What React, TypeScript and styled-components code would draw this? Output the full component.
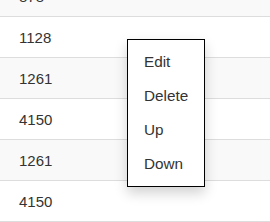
import styled, { createGlobalStyle } from "styled-components";

const GlobalStyle = createGlobalStyle`
  html, body {
    margin: 0;
    padding: 0;
    background: #fff;
    overflow: hidden;
  }
  body {
    font-family: "Liberation Sans", Arial, sans-serif;
    font-size: 15px;
    color: #333;
  }
`;

const Page = styled.div`
  position: relative;
  width: 270px;
  height: 222px;
  overflow: hidden;
`;

const Table = styled.div`
  display: flex;
  flex-direction: column;
  margin-top: -24px;
`;

const Row = styled.div<{ $striped: boolean }>`
  display: flex;
  align-items: center;
  height: 40px;
  padding-left: 19px;
  border-bottom: 1px solid #dddddd;
  background: ${(p) => (p.$striped ? "#f9f9f9" : "#ffffff")};
`;

const Menu = styled.ul`
  position: absolute;
  left: 127px;
  top: 39px;
  width: 76px;
  margin: 0;
  padding: 5px 0;
  list-style: none;
  background: #fff;
  border: 1px solid #000;
  box-shadow: 0 6px 12px rgba(0, 0, 0, 0.18);
`;

const MenuItem = styled.li`
  display: flex;
  align-items: center;
  height: 34px;
  padding-left: 16px;
  font-size: 15.3px;
  color: #333;
  cursor: pointer;
`;

const values = ["878", "1128", "1261", "4150", "1261", "4150"];
const actions = ["Edit", "Delete", "Up", "Down"];

export default function App() {
  return (
    <Page>
      <GlobalStyle />
      <Table>
        {values.map((v, i) => (
          <Row key={i} $striped={i % 2 === 0}>
            {v}
          </Row>
        ))}
      </Table>
      <Menu>
        {actions.map((a) => (
          <MenuItem key={a}>{a}</MenuItem>
        ))}
      </Menu>
    </Page>
  );
}
